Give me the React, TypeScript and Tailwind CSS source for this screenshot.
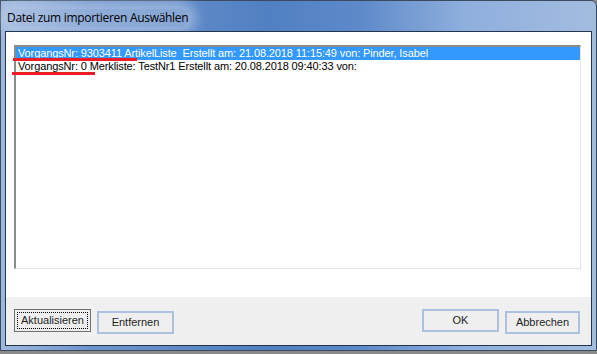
import React from 'react';

const rows = [
  'VorgangsNr: 9303411 ArtikelListe  Erstellt am: 21.08.2018 11:15:49 von: Pinder, Isabel',
  'VorgangsNr: 0 Merkliste: TestNr1 Erstellt am: 20.08.2018 09:40:33 von:',
];

const Btn: React.FC<{ label: string; w: string; focused?: boolean }> = ({ label, w, focused }) => (
  <button
    className={
      focused
        ? `${w} h-[23px] border border-[#707070] bg-[#eeeeee] p-[2px] text-[11px] text-[#1e1e1e]`
        : `${w} h-[23px] border-2 border-[#adc2e0] bg-[#efefef] text-[11px] text-[#1e1e1e]`
    }
  >
    {focused ? (
      <span className="flex h-full w-full items-center justify-center border border-dotted border-black">{label}</span>
    ) : (
      label
    )}
  </button>
);

export default function App() {
  return (
    <div className="relative h-[354px] w-[597px] overflow-hidden bg-[#8a8a8a] font-['Liberation_Sans',Arial,sans-serif]">
      {/* window */}
      <div className="flex h-[351px] w-[597px] flex-col rounded-tr-[6px] border border-[#3c4a5e] bg-[linear-gradient(90deg,#9fb8dc_0%,#6e94cc_15%,#5180c2_45%,#5d89c9_60%,#8fafdd_78%,#a3bce0_100%)] px-[4px] pb-[4px]">
        {/* title bar */}
        <div className="flex h-[30px] shrink-0 items-center pl-[2px] pt-[3px]">
          <span className="rounded-[10px] bg-[#c3d3ea]/40 font-['Open_Sans',sans-serif] text-[12px] tracking-[-0.3px] text-black shadow-[0_0_12px_8px_rgba(196,212,236,0.55)]">
            Datei zum importieren Auswählen
          </span>
        </div>

        {/* client */}
        <div className="flex flex-1 flex-col border border-[#23344f] bg-white">
          <div className="flex-1 pl-[8px] pr-[10px] pt-[13px]">
            <div className="h-[224px] border-b border-l-2 border-r border-t-2 border-b-[#e3e3e3] border-l-[#8c8c8c] border-r-[#e3e3e3] border-t-[#8c8c8c] bg-white">
              {rows.map((r, i) => (
                <div
                  key={i}
                  className={
                    i === 0
                      ? 'h-[13px] whitespace-pre bg-[#3399ff] pl-[2px] text-[11px] leading-[13px] tracking-[-0.12px] text-white'
                      : 'h-[13px] whitespace-pre pl-[2px] text-[11px] leading-[13px] tracking-[-0.12px] text-black'
                  }
                >
                  {r}
                </div>
              ))}
            </div>
          </div>

          <div className="flex h-[48px] shrink-0 items-start bg-[#f0f0f0] pl-[8px] pr-[11px] pt-[12px]">
            <Btn label="Aktualisieren" w="w-[77px]" focused />
            <div className="ml-[6px]">
              <Btn label="Entfernen" w="w-[77px]" />
            </div>
            <div className="flex-1" />
            <Btn label="OK" w="w-[77px]" />
            <div className="ml-[6px]">
              <Btn label="Abbrechen" w="w-[75px]" />
            </div>
          </div>
        </div>
      </div>

      {/* red annotation underlines */}
      <div className="absolute left-[13px] top-[58px] h-[3px] w-[124px] bg-[#ee1c24]" />
      <div className="absolute left-[12px] top-[72px] h-[3px] w-[83px] bg-[#ee1c24]" />
    </div>
  );
}
